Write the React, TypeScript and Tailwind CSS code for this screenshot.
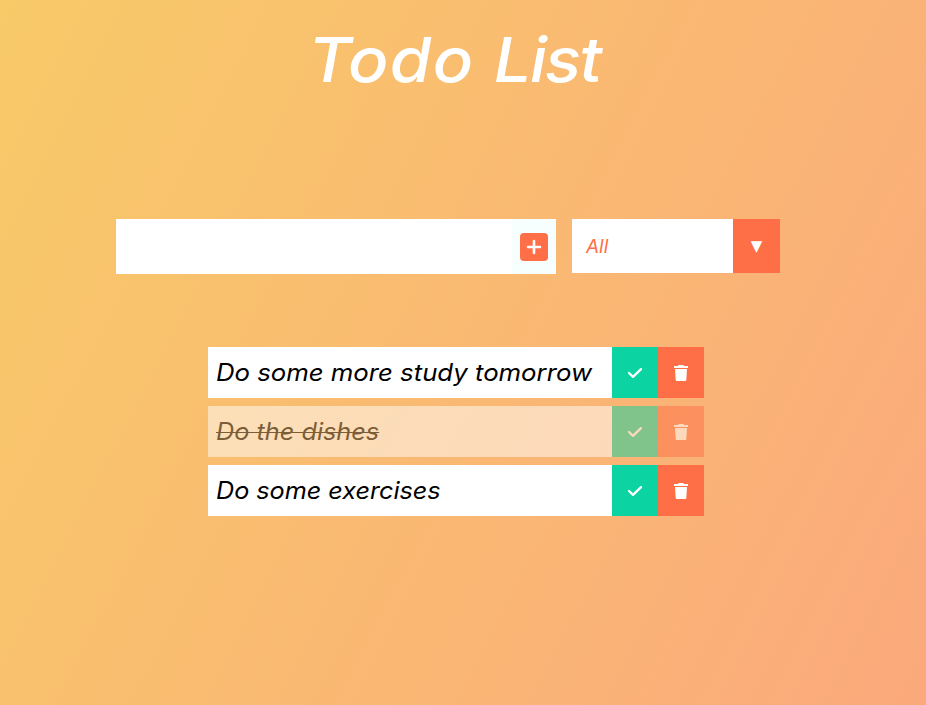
import React from "react";

const todos = [
  { text: "Do some more study tomorrow", done: false, fit: "scale-x-[1.072]" },
  { text: "Do the dishes", done: true, fit: "scale-x-[1.053] line-through decoration-1" },
  { text: "Do some exercises", done: false, fit: "scale-x-[1.049]" },
];

function PlusIcon() {
  return (
    <svg viewBox="0 0 28 28" className="size-7" fill="none">
      <rect width="28" height="28" rx="4" fill="#ff6f47" />
      <path d="M14 8v12M8 14h12" stroke="#fff" strokeWidth="2.6" strokeLinecap="round" />
    </svg>
  );
}

function CheckIcon() {
  return (
    <svg viewBox="0 0 16 16" className="size-4" fill="none" stroke="currentColor" strokeWidth="2.3" strokeLinecap="round" strokeLinejoin="round">
      <path d="M2 8 6 11.9 14 4.1" />
    </svg>
  );
}

function TrashIcon() {
  return (
    <svg viewBox="0 0 16 16" className="size-4" fill="currentColor">
      <path d="M1 1h4L5.6 0h4.8l.6 1h4v2H1zM2 4h12l-.7 11a1 1 0 0 1-1 1H3.7a1 1 0 0 1-1-1z" />
    </svg>
  );
}

export default function App() {
  return (
    <div className="flex h-[705px] w-[926px] flex-col overflow-hidden bg-[linear-gradient(117deg,#f8ca68,#fba97c)] font-[Inter,sans-serif] italic">
      <header className="flex h-[120px] pl-[308px] text-white">
        <h1 className="origin-left scale-x-[1.08] text-[62px] leading-[120px] font-medium whitespace-nowrap">
          <span className="tracking-[1.3px]">Todo </span>
          <span className="tracking-[-1.6px]">List</span>
        </h1>
      </header>
      <form className="mt-[99px] ml-[116px] flex">
        <div className="flex h-[55px] w-[440px] justify-end bg-white">
          <button type="button" className="flex w-11 items-center justify-center bg-[#f7fffe]">
            <PlusIcon />
          </button>
        </div>
        <div className="ml-4 flex h-[54px] w-[208px]">
          <div className="flex flex-1 items-center bg-white pt-0.5 pl-[14px] text-[19px] text-[#ff6f47]">All</div>
          <div className="flex w-[47px] items-center justify-center bg-[#ff6f47] text-white not-italic">
            <span className="font-['DejaVu_Sans'] text-[15px] leading-none">▼</span>
          </div>
        </div>
      </form>
      <ul className="mt-[73px] ml-[208px] flex w-[496px] flex-col gap-2">
        {todos.map((t) => (
          <li key={t.text} className={t.done ? "flex h-[51px] opacity-50" : "flex h-[51px]"}>
            <div className="flex flex-1 items-center bg-white pl-2 text-2xl text-black">
              <span className={`origin-left whitespace-nowrap ${t.fit}`}>{t.text}</span>
            </div>
            <button className="flex w-[46px] items-center justify-center bg-[#0bd4a2] text-white"><CheckIcon /></button>
            <button className="flex w-[46px] items-center justify-center bg-[#ff6f47] text-white"><TrashIcon /></button>
          </li>
        ))}
      </ul>
    </div>
  );
}
